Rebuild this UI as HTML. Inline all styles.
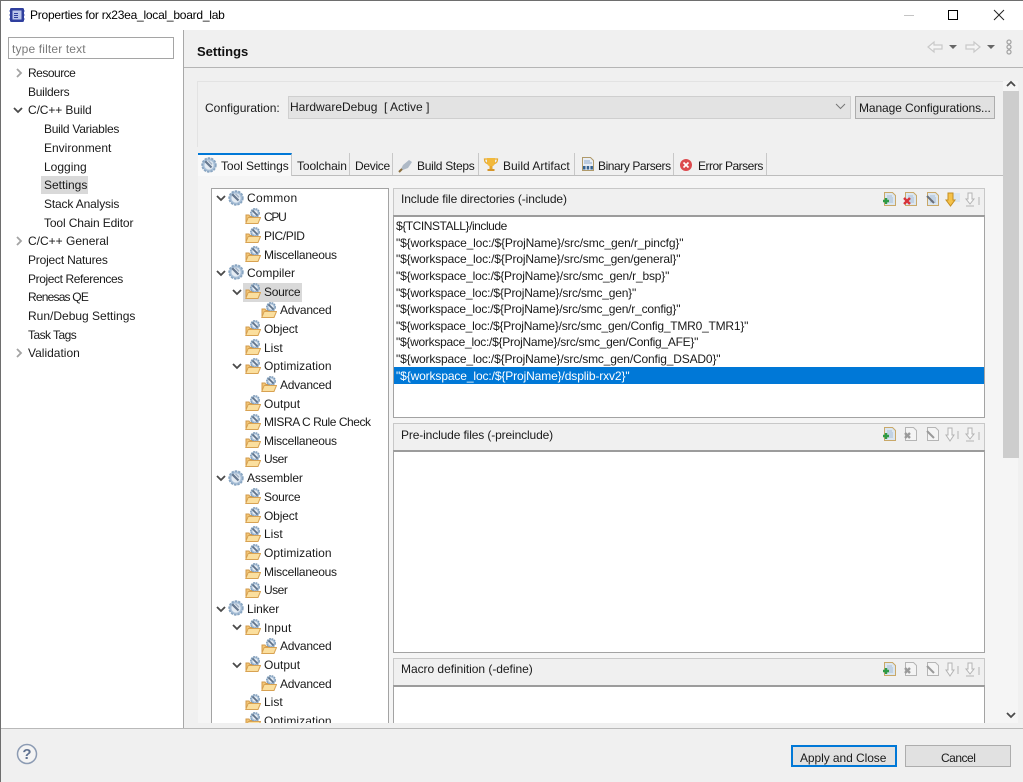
<!DOCTYPE html>
<html><head><meta charset="utf-8"><style>
html,body{margin:0;padding:0;background:#f0f0f0}
#w{position:relative;width:1023px;height:782px;overflow:hidden;background:#f0f0f0;font:12px/16px "Liberation Sans",sans-serif;color:#1a1a1a;filter:blur(.3px)}
#w div,#w span,#w svg{position:absolute}
.t{white-space:nowrap}
.r{position:absolute;white-space:nowrap;height:16px;line-height:16px}
.ic{width:16px;height:16px}
</style></head><body><div id="w">
<svg width="0" height="0" style="left:0;top:0">
<defs>
<symbol id="g" viewBox="0 0 16 16"><circle cx="8" cy="8" r="6.800" fill="#a9c0d8" stroke="#8aa6c2" stroke-width="1.800" stroke-dasharray="2.400 1"/><circle cx="8" cy="8" r="4.600" fill="#e6edf4"/><path d="M4.200 4.200l6.300 6.300" stroke="#66788f" stroke-width="2.200"/><path d="M7.500 3.800l3.600 3.600" stroke="#a3b3c6" stroke-width="1.400"/></symbol>
<symbol id="f" viewBox="0 0 16 16"><path d="M1 14V7h3l1 1.500h5V14z" fill="#f3c676" stroke="#d29a4b"/><circle cx="10" cy="5" r="4.300" fill="#a9c0d8" stroke="#7f9cb8" stroke-width="1.300" stroke-dasharray="1.800 .8"/><circle cx="10" cy="5" r="2.600" fill="#e6edf4"/><path d="M7.500 2.500l5 5" stroke="#5f7289" stroke-width="1.700"/><path d="M.8 15.500L3.200 9.500H15.500L13 15.500z" fill="#fbdf9e" stroke="#d8a252"/></symbol>
<symbol id="d" viewBox="0 0 12 12"><path d="M2 4l4 4 4-4" fill="none" stroke="#4a4a4a" stroke-width="1.800"/></symbol>
<symbol id="c" viewBox="0 0 12 12"><path d="M4 2l4 4-4 4" fill="none" stroke="#a3a3a3" stroke-width="1.800"/></symbol>
<symbol id="doc" viewBox="0 0 16 16"><path d="M2.500 1.500h8l3 3v10h-11z" fill="#dbe6f0" stroke="#c9a868"/><path d="M5 5h5M5 7h6M5 9h6M5 11h6" stroke="#a9bfd6"/></symbol>
<symbol id="docg" viewBox="0 0 16 16"><path d="M2.500 1.500h8l3 3v10h-11z" fill="#f4f4f4" stroke="#b5b5b5"/></symbol>
</defs></svg>

<!-- window frame -->
<div style="left:0;top:0;width:1023px;height:30px;background:#fff"></div>
<div style="left:0;top:0;width:1023px;height:1px;background:#6e6e6e"></div>
<div style="left:0;top:0;width:1px;height:782px;background:#6e6e6e"></div>
<svg style="left:9px;top:7px" width="16" height="16" viewBox="0 0 16 16"><rect x="1" y="1" width="14" height="14" rx="1.500" fill="#2f3f9e"/><rect x="3.500" y="3.500" width="9" height="9" fill="#b9c4ea"/><path d="M5 8.500h4M5 6.500h4M5 10.500h4" stroke="#2f3f9e"/><path d="M0 4h16M0 8h16M0 12h16" stroke="#6a78c4" stroke-dasharray="1 14"/></svg>
<span class="t" style="left:30px;top:7px;color:#000;letter-spacing:-.24px">Properties for rx23ea_local_board_lab</span>
<div style="left:904px;top:15px;width:10px;height:1px;background:#c4c4c4"></div>
<div style="left:948px;top:10px;width:8px;height:8px;border:1px solid #000"></div>
<svg style="left:993px;top:9px" width="12" height="12"><path d="M1 1l10 10M11 1L1 11" stroke="#222" stroke-width="1"/></svg>

<!-- left panel -->
<div style="left:1px;top:30px;width:182px;height:698px;background:#fff"></div>
<div style="left:183px;top:30px;width:1px;height:698px;background:#a8a8a8"></div>
<div style="left:8px;top:37px;width:164px;height:20px;border:1px solid #a5a5a5;background:#fff"></div>
<span class="t" style="left:12px;top:41px;color:#7a7a7a;letter-spacing:.15px">type filter text</span>
<div style="left:41px;top:176px;width:47px;height:18px;background:#d9d9d9"></div>
<svg class="ic" style="left:13px;top:67px;width:12px;height:12px"><use href="#c"/></svg>
<svg class="ic" style="left:12px;top:104px;width:12px;height:12px"><use href="#d"/></svg>
<svg class="ic" style="left:13px;top:235px;width:12px;height:12px"><use href="#c"/></svg>
<svg class="ic" style="left:13px;top:347px;width:12px;height:12px"><use href="#c"/></svg>
<span class="r" style="left:28px;top:65px;letter-spacing:-.5px">Resource</span>
<span class="r" style="left:28px;top:84px;letter-spacing:-.25px">Builders</span>
<span class="r" style="left:28px;top:102px;letter-spacing:-.1px">C/C++ Build</span>
<span class="r" style="left:44px;top:121px;letter-spacing:-.27px">Build Variables</span>
<span class="r" style="left:44px;top:140px">Environment</span>
<span class="r" style="left:44px;top:159px">Logging</span>
<span class="r" style="left:44px;top:177px">Settings</span>
<span class="r" style="left:44px;top:196px;letter-spacing:-.15px">Stack Analysis</span>
<span class="r" style="left:44px;top:215px;letter-spacing:-.12px">Tool Chain Editor</span>
<span class="r" style="left:28px;top:233px">C/C++ General</span>
<span class="r" style="left:28px;top:252px;letter-spacing:-.2px">Project Natures</span>
<span class="r" style="left:28px;top:271px;letter-spacing:-.4px">Project References</span>
<span class="r" style="left:28px;top:289px;letter-spacing:-.8px">Renesas QE</span>
<span class="r" style="left:28px;top:308px">Run/Debug Settings</span>
<span class="r" style="left:28px;top:327px;letter-spacing:-.55px">Task Tags</span>
<span class="r" style="left:28px;top:345px">Validation</span>

<!-- header -->
<span class="t" style="left:197px;top:44px;font-weight:bold;font-size:13px;color:#111">Settings</span>
<div style="left:184px;top:67px;width:839px;height:1px;background:#b5b5b5"></div>
<svg style="left:926px;top:39px" width="90" height="16" viewBox="0 0 90 16"><path d="M2 8l6-5v3h8v4H8v3z" fill="#f4f4f4" stroke="#c9c9c9" stroke-width="1.200"/><path d="M23 6h8l-4 4z" fill="#666"/><path d="M54 8l-6-5v3h-8v4h8v3z" fill="#f4f4f4" stroke="#c9c9c9" stroke-width="1.200"/><path d="M61 6h8l-4 4z" fill="#666"/><circle cx="83" cy="3" r="2" fill="none" stroke="#a5a5a5" stroke-width="1.300"/><circle cx="83" cy="8" r="2" fill="none" stroke="#a5a5a5" stroke-width="1.300"/><circle cx="83" cy="13" r="2" fill="none" stroke="#a5a5a5" stroke-width="1.300"/></svg>

<!-- scrollbar -->
<div style="left:1003px;top:81px;width:15px;height:642px;background:#f5f5f5"></div>
<svg style="left:1005px;top:78px;width:12px;height:12px"><use href="#d" transform="matrix(1 0 0 -1 0 12)"/></svg>
<div style="left:1003px;top:91px;width:16px;height:367px;background:#cdcdcd"></div>
<svg style="left:1005px;top:709px;width:12px;height:12px"><use href="#d"/></svg>

<!-- config group -->
<div style="left:197px;top:81px;width:805px;height:65px;border-top:1px solid #e3e3e3;border-left:1px solid #e3e3e3"></div>
<span class="t" style="left:205px;top:100px">Configuration:</span>
<div style="left:288px;top:96px;width:561px;height:21px;background:#e3e3e3;border:1px solid #cfcfcf"></div>
<span class="t" style="left:290px;top:99px">HardwareDebug&nbsp; [ Active ]</span>
<svg style="left:835px;top:102px" width="11" height="10"><path d="M1 2l4.500 4.500L10 2" fill="none" stroke="#777"/></svg>
<div style="left:855px;top:96px;width:138px;height:21px;background:#e1e1e1;border:1px solid #adadad"></div>
<span class="t" style="left:859px;top:100px;letter-spacing:-.1px">Manage Configurations...</span>

<!-- tabs -->
<div style="left:292px;top:175px;width:711px;height:1px;background:#bdbdbd"></div>
<div style="left:198px;top:153px;width:94px;height:23px;background:#f9f9f9;border-top:2px solid #0078d7;box-sizing:border-box;border-right:1px solid #c8c8c8"></div>
<div style="left:198px;top:176px;width:805px;height:547px;background:#f5f5f5"></div>
<svg class="ic" style="left:201px;top:157px"><use href="#g"/></svg>
<span class="t" style="left:221px;top:158px;letter-spacing:-.08px">Tool Settings</span>
<div style="left:349px;top:153px;width:1px;height:22px;background:#c8c8c8"></div>
<div style="left:392px;top:153px;width:1px;height:22px;background:#c8c8c8"></div>
<div style="left:478px;top:153px;width:1px;height:22px;background:#c8c8c8"></div>
<div style="left:574px;top:153px;width:1px;height:22px;background:#c8c8c8"></div>
<div style="left:673px;top:153px;width:1px;height:22px;background:#c8c8c8"></div>
<div style="left:766px;top:153px;width:1px;height:22px;background:#c8c8c8"></div>
<span class="t" style="left:297px;top:158px;letter-spacing:-.1px">Toolchain</span>
<span class="t" style="left:355px;top:158px;letter-spacing:-.3px">Device</span>
<svg class="ic" style="left:398px;top:157px" viewBox="0 0 16 16"><path d="M2 14l3-6 6-5 3 2-4 6z" fill="#aeb9c6"/><path d="M1 15l3-3" stroke="#8b6f3e" stroke-width="2"/></svg>
<span class="t" style="left:417px;top:158px;letter-spacing:-.3px">Build Steps</span>
<svg class="ic" style="left:483px;top:156px" viewBox="0 0 16 16"><path d="M4 2h8v5c0 2-2 3.500-4 3.500S4 9 4 7z" fill="#f2b93c"/><path d="M4 3H1.500c0 3 1 4 3 4.500M12 3h2.500c0 3-1 4-3 4.500" fill="none" stroke="#e7a92e" stroke-width="1.300"/><rect x="6.500" y="10" width="3" height="3" fill="#e7a92e"/><rect x="4.500" y="13" width="7" height="2" fill="#d6962a"/></svg>
<span class="t" style="left:503px;top:158px">Build Artifact</span>
<svg class="ic" style="left:580px;top:156px" viewBox="0 0 16 16"><path d="M2.500 1.500h8l3 3v10h-11z" fill="#e9eef5" stroke="#b09a6a"/><path d="M4 5h6M4 7h8" stroke="#8aa5c9"/><rect x="3" y="10" width="2.500" height="3.500" fill="#35618f"/><rect x="6.700" y="10" width="2.500" height="3.500" fill="#35618f"/><rect x="10.400" y="10" width="2.500" height="3.500" fill="#35618f"/></svg>
<span class="t" style="left:598px;top:158px;letter-spacing:-.43px">Binary Parsers</span>
<svg class="ic" style="left:678px;top:157px" viewBox="0 0 16 16"><circle cx="8" cy="8" r="6" fill="#dc4a4e"/><path d="M5.500 5.500l5 5M10.500 5.500l-5 5" stroke="#fff" stroke-width="1.700"/></svg>
<span class="t" style="left:698px;top:158px;letter-spacing:-.5px">Error Parsers</span>

<!-- inner tree -->
<div style="left:211px;top:188px;width:176px;height:535px;background:#fff;border:1px solid #a3a3a3;border-bottom:0;overflow:hidden" id="tree">
<div style="left:31px;top:94px;width:59px;height:19px;background:#d9d9d9"></div>
<svg style="left:3px;top:3px;width:12px;height:12px"><use href="#d"/></svg><svg class="ic" style="left:16px;top:1px"><use href="#g"/></svg><span class="r" style="left:35px;top:1px;letter-spacing:.3px">Common</span>
<svg class="ic" style="left:33px;top:19px"><use href="#f"/></svg><span class="r" style="left:52px;top:20px;letter-spacing:-1.3px">CPU</span>
<svg class="ic" style="left:33px;top:38px"><use href="#f"/></svg><span class="r" style="left:52px;top:39px;letter-spacing:-.4px">PIC/PID</span>
<svg class="ic" style="left:33px;top:57px"><use href="#f"/></svg><span class="r" style="left:52px;top:58px;letter-spacing:-.25px">Miscellaneous</span>
<svg style="left:3px;top:78px;width:12px;height:12px"><use href="#d"/></svg><svg class="ic" style="left:16px;top:75px"><use href="#g"/></svg><span class="r" style="left:35px;top:76px">Compiler</span>
<svg style="left:19px;top:97px;width:12px;height:12px"><use href="#d"/></svg><svg class="ic" style="left:33px;top:94px"><use href="#f"/></svg><span class="r" style="left:52px;top:95px;letter-spacing:-.3px">Source</span>
<svg class="ic" style="left:49px;top:113px"><use href="#f"/></svg><span class="r" style="left:68px;top:113px;letter-spacing:-.25px">Advanced</span>
<svg class="ic" style="left:33px;top:131px"><use href="#f"/></svg><span class="r" style="left:52px;top:132px;letter-spacing:-.15px">Object</span>
<svg class="ic" style="left:33px;top:150px"><use href="#f"/></svg><span class="r" style="left:52px;top:151px">List</span>
<svg style="left:19px;top:171px;width:12px;height:12px"><use href="#d"/></svg><svg class="ic" style="left:33px;top:169px"><use href="#f"/></svg><span class="r" style="left:52px;top:169px;letter-spacing:.08px">Optimization</span>
<svg class="ic" style="left:49px;top:187px"><use href="#f"/></svg><span class="r" style="left:68px;top:188px;letter-spacing:-.25px">Advanced</span>
<svg class="ic" style="left:33px;top:206px"><use href="#f"/></svg><span class="r" style="left:52px;top:207px">Output</span>
<svg class="ic" style="left:33px;top:225px"><use href="#f"/></svg><span class="r" style="left:52px;top:225px;letter-spacing:-.45px">MISRA C Rule Check</span>
<svg class="ic" style="left:33px;top:243px"><use href="#f"/></svg><span class="r" style="left:52px;top:244px;letter-spacing:-.25px">Miscellaneous</span>
<svg class="ic" style="left:33px;top:262px"><use href="#f"/></svg><span class="r" style="left:52px;top:262px;letter-spacing:-.5px">User</span>
<svg style="left:3px;top:283px;width:12px;height:12px"><use href="#d"/></svg><svg class="ic" style="left:16px;top:281px"><use href="#g"/></svg><span class="r" style="left:35px;top:281px;letter-spacing:-.1px">Assembler</span>
<svg class="ic" style="left:33px;top:299px"><use href="#f"/></svg><span class="r" style="left:52px;top:300px;letter-spacing:-.3px">Source</span>
<svg class="ic" style="left:33px;top:318px"><use href="#f"/></svg><span class="r" style="left:52px;top:319px;letter-spacing:-.15px">Object</span>
<svg class="ic" style="left:33px;top:337px"><use href="#f"/></svg><span class="r" style="left:52px;top:337px">List</span>
<svg class="ic" style="left:33px;top:355px"><use href="#f"/></svg><span class="r" style="left:52px;top:356px;letter-spacing:.08px">Optimization</span>
<svg class="ic" style="left:33px;top:374px"><use href="#f"/></svg><span class="r" style="left:52px;top:375px;letter-spacing:-.25px">Miscellaneous</span>
<svg class="ic" style="left:33px;top:393px"><use href="#f"/></svg><span class="r" style="left:52px;top:393px;letter-spacing:-.5px">User</span>
<svg style="left:3px;top:414px;width:12px;height:12px"><use href="#d"/></svg><svg class="ic" style="left:16px;top:411px"><use href="#g"/></svg><span class="r" style="left:35px;top:412px;letter-spacing:-.1px">Linker</span>
<svg style="left:19px;top:432px;width:12px;height:12px"><use href="#d"/></svg><svg class="ic" style="left:33px;top:430px"><use href="#f"/></svg><span class="r" style="left:52px;top:431px;letter-spacing:.15px">Input</span>
<svg class="ic" style="left:49px;top:449px"><use href="#f"/></svg><span class="r" style="left:68px;top:449px;letter-spacing:-.25px">Advanced</span>
<svg style="left:19px;top:470px;width:12px;height:12px"><use href="#d"/></svg><svg class="ic" style="left:33px;top:467px"><use href="#f"/></svg><span class="r" style="left:52px;top:468px">Output</span>
<svg class="ic" style="left:49px;top:486px"><use href="#f"/></svg><span class="r" style="left:68px;top:487px;letter-spacing:-.25px">Advanced</span>
<svg class="ic" style="left:33px;top:505px"><use href="#f"/></svg><span class="r" style="left:52px;top:505px">List</span>
<svg class="ic" style="left:33px;top:523px"><use href="#f"/></svg><span class="r" style="left:52px;top:524px;letter-spacing:.08px">Optimization</span>
</div>

<!-- section 1 -->
<div style="left:393px;top:188px;width:590px;height:27px;background:#f0f0f0;border:1px solid #c8c8c8;border-bottom:0"></div>
<span class="t" style="left:401px;top:191px;letter-spacing:-.1px">Include file directories (-include)</span>
<div style="left:393px;top:215px;width:590px;height:200px;background:#fff;border:1px solid #a3a3a3;border-top:2px solid #9c9c9c"></div>
<div style="left:394px;top:367px;width:590px;height:17px;background:#0078d7"></div>
<span class="r" style="left:396px;top:218px;letter-spacing:-.45px">${TCINSTALL}/include</span>
<span class="r" style="left:396px;top:235px;letter-spacing:-.14px">"${workspace_loc:/${ProjName}/src/smc_gen/r_pincfg}"</span>
<span class="r" style="left:396px;top:251px;letter-spacing:-.15px">"${workspace_loc:/${ProjName}/src/smc_gen/general}"</span>
<span class="r" style="left:396px;top:268px;letter-spacing:-.18px">"${workspace_loc:/${ProjName}/src/smc_gen/r_bsp}"</span>
<span class="r" style="left:396px;top:285px;letter-spacing:-.2px">"${workspace_loc:/${ProjName}/src/smc_gen}"</span>
<span class="r" style="left:396px;top:301px;letter-spacing:-.2px">"${workspace_loc:/${ProjName}/src/smc_gen/r_config}"</span>
<span class="r" style="left:396px;top:318px;letter-spacing:-.22px">"${workspace_loc:/${ProjName}/src/smc_gen/Config_TMR0_TMR1}"</span>
<span class="r" style="left:396px;top:334px;letter-spacing:-.27px">"${workspace_loc:/${ProjName}/src/smc_gen/Config_AFE}"</span>
<span class="r" style="left:396px;top:351px;letter-spacing:-.16px">"${workspace_loc:/${ProjName}/src/smc_gen/Config_DSAD0}"</span>
<span class="r" style="left:396px;top:368px;color:#fff;letter-spacing:-.12px">"${workspace_loc:/${ProjName}/dsplib-rxv2}"</span>

<svg style="left:882px;top:191px" width="100" height="17" viewBox="0 0 100 17">
<use href="#doc" x="0" y="0" width="16" height="16"/><path d="M1 10h6M4 7v6" stroke="#2e9a45" stroke-width="2.400"/>
<use href="#doc" x="21" y="0" width="16" height="16"/><path d="M22 7l6 6M28 7l-6 6" stroke="#d8333a" stroke-width="2.400"/>
<use href="#doc" x="43" y="0" width="16" height="16"/><path d="M45 5l7 7" stroke="#6b6f78" stroke-width="2"/>
<path d="M71 2h7v9h-7" fill="#dbe6f0"/><path d="M64 9h2V2h5v7h2l-4.500 6z" fill="#f5c24a" stroke="#c58f22"/>
<path d="M84 8h2V2h4v6h2l-4 5z" fill="#f8f8f8" stroke="#b3b3b3"/><path d="M84 15h8M97 6v8" stroke="#b3b3b3"/>
</svg>

<!-- section 2 -->
<div style="left:393px;top:423px;width:590px;height:27px;background:#f0f0f0;border:1px solid #c8c8c8;border-bottom:0"></div>
<span class="t" style="left:401px;top:427px;letter-spacing:-.13px">Pre-include files (-preinclude)</span>
<div style="left:393px;top:450px;width:590px;height:200px;background:#fff;border:1px solid #a3a3a3;border-top:2px solid #9c9c9c"></div>
<svg style="left:882px;top:426px" width="100" height="17" viewBox="0 0 100 17">
<use href="#doc" x="0" y="0" width="16" height="16"/><path d="M1 10h6M4 7v6" stroke="#2e9a45" stroke-width="2.400"/>
<use href="#docg" x="21" y="0" width="16" height="16"/><path d="M23 7l5 5M28 7l-5 5" stroke="#9a9a9a" stroke-width="2.400"/>
<use href="#docg" x="43" y="0" width="16" height="16"/><path d="M45 5l7 7" stroke="#9a9a9a" stroke-width="2"/>
<path d="M64 9h2V2h4v7h2l-4 6z" fill="#f8f8f8" stroke="#b3b3b3"/><path d="M76 5v8" stroke="#b3b3b3"/>
<path d="M84 8h2V2h4v6h2l-4 5z" fill="#f8f8f8" stroke="#b3b3b3"/><path d="M84 15h8M97 6v8" stroke="#b3b3b3"/>
</svg>

<!-- section 3 -->
<div style="left:393px;top:658px;width:590px;height:27px;background:#f0f0f0;border:1px solid #c8c8c8;border-bottom:0"></div>
<span class="t" style="left:401px;top:661px;letter-spacing:-.04px">Macro definition (-define)</span>
<div style="left:393px;top:685px;height:38px;background:#fff;border-left:1px solid #a3a3a3;border-right:1px solid #a3a3a3;border-top:2px solid #9c9c9c;box-sizing:border-box;width:592px"></div>
<svg style="left:882px;top:661px" width="100" height="17" viewBox="0 0 100 17">
<use href="#doc" x="0" y="0" width="16" height="16"/><path d="M1 10h6M4 7v6" stroke="#2e9a45" stroke-width="2.400"/>
<use href="#docg" x="21" y="0" width="16" height="16"/><path d="M23 7l5 5M28 7l-5 5" stroke="#9a9a9a" stroke-width="2.400"/>
<use href="#docg" x="43" y="0" width="16" height="16"/><path d="M45 5l7 7" stroke="#9a9a9a" stroke-width="2"/>
<path d="M64 9h2V2h4v7h2l-4 6z" fill="#f8f8f8" stroke="#b3b3b3"/><path d="M76 5v8" stroke="#b3b3b3"/>
<path d="M84 8h2V2h4v6h2l-4 5z" fill="#f8f8f8" stroke="#b3b3b3"/><path d="M84 15h8M97 6v8" stroke="#b3b3b3"/>
</svg>

<!-- footer -->
<div style="left:184px;top:723px;width:839px;height:59px;background:#f0f0f0"></div>
<div style="left:1px;top:729px;width:183px;height:53px;background:#f0f0f0"></div>
<div style="left:1px;top:728px;width:1022px;height:1px;background:#b9b9b9"></div>
<svg style="left:16px;top:743px" width="22" height="22" viewBox="0 0 22 22"><circle cx="11" cy="11" r="9.500" fill="#f4f4f4" stroke="#8c9bb3" stroke-width="1.500"/><text x="11" y="16" text-anchor="middle" font-family="Liberation Sans" font-weight="bold" font-size="15" fill="#5f7190">?</text></svg>
<div style="left:791px;top:745px;width:102px;height:18px;background:#e1e1e1;border:2px solid #0078d7"></div>
<span class="t" style="left:800px;top:750px;letter-spacing:-.07px">Apply and Close</span>
<div style="left:905px;top:745px;width:104px;height:20px;background:#e1e1e1;border:1px solid #adadad"></div>
<span class="t" style="left:941px;top:750px;letter-spacing:-.5px">Cancel</span>
</div></body></html>
